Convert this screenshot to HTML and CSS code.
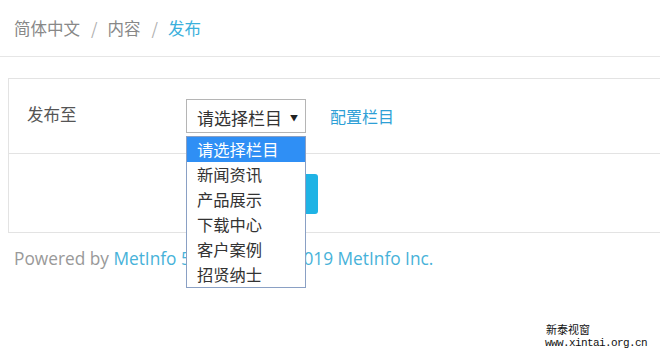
FILE: index.html
```html
<!DOCTYPE html>
<html lang="zh-CN">
<head>
<meta charset="utf-8">
<link rel="stylesheet" href="styles.css">
</head>
<body>
<div class="crumb">
  <span class="c-item">简体中文</span><span class="sep">/</span><span class="c-item">内容</span><span class="sep">/</span><span class="c-active">发布</span>
</div>
<div class="panel">
  <div class="row row-top">
    <span class="label">发布至</span>
    <div class="select"><span>请选择栏目</span><span class="arrow">▼</span></div>
    <a class="link">配置栏目</a>
  </div>
  <div class="row row-btn">
    <div class="btn"></div>
  </div>
</div>
<div class="footer">Powered by <span class="blue">MetInfo 5.3.19 ©2008-2019</span>&nbsp;<span class="blue">MetInfo Inc.</span></div>

<ul class="dropdown">
  <li class="sel">请选择栏目</li>
  <li>新闻资讯</li>
  <li>产品展示</li>
  <li>下载中心</li>
  <li>客户案例</li>
  <li>招贤纳士</li>
</ul>

<div class="mark">
  <div class="mark-cn">新泰视窗</div>
  <div class="mark-en">www.xintai.org.cn</div>
</div>
</body>
</html>
```
FILE: styles.css
```css
html, body {
  margin: 0;
  padding: 0;
  width: 660px;
  height: 352px;
  overflow: hidden;
  background: #fff;
  font-family: "Noto Sans CJK SC", "Open Sans", sans-serif;
  font-size: 16px;
  color: #555;
  position: relative;
}
.crumb {
  height: 56px;
  border-bottom: 1px solid #e6e6e6;
  display: flex;
  align-items: center;
  padding-left: 14px;
  color: #888;
  line-height: 1;
  font-size: 16.5px;
}
.sep {
  margin: 0 10px 0 11px;
  color: #b0b0b0;
}
.c-active {
  color: #3ab0dc;
}
.panel {
  margin: 21px 0 0 8px;
  width: 700px;
  border: 1px solid #e3e3e3;
}
.row-top {
  height: 74px;
  border-bottom: 1px solid #e3e3e3;
  display: flex;
  align-items: flex-start;
}
.label {
  margin: 23px 0 0 18px;
  width: 159px;
  color: #555;
  line-height: 24px;
  font-size: 16.5px;
}
.select {
  margin-top: 20px;
  width: 120px;
  height: 34px;
  border: 1px solid #b5b5b5;
  display: flex;
  align-items: center;
  justify-content: space-between;
  padding: 2px 7px 0 10px;
  box-sizing: border-box;
  color: #333;
  font-size: 17px;
}
.arrow {
  font-size: 8px;
  color: #222;
}
.link {
  margin: 25px 0 0 24px;
  color: #2e9fd6;
  line-height: 24px;
}
.row-btn {
  height: 78px;
  padding-left: 177px;
  display: flex;
  align-items: flex-start;
}
.btn {
  margin-top: 20px;
  width: 132px;
  height: 40px;
  background: #1fb3e5;
  border-radius: 3px;
}
.footer {
  margin: 14px 0 0 14px;
  line-height: 24px;
  color: #999;
  font-family: "Open Sans", "Noto Sans CJK SC", sans-serif;
  font-size: 17.3px;
  white-space: nowrap;
}
.blue {
  color: #47b2d9;
}
.dropdown {
  position: absolute;
  left: 186px;
  top: 136px;
  width: 118px;
  margin: 0;
  padding: 0;
  list-style: none;
  border: 1px solid #8aa0c4;
  background: #fff;
}
.dropdown li {
  height: 25px;
  line-height: 25px;
  padding-left: 10px;
  color: #333;
  font-size: 16.3px;
}
.dropdown li.sel {
  background: #2f8ff5;
  color: #fff;
}
.mark {
  position: absolute;
  left: 545px;
  top: 322px;
  color: #111;
  font-size: 11px;
  line-height: 14px;
}
.mark-cn {
  padding-left: 1px;
}
.mark-en {
  font-family: "Liberation Mono", monospace;
  font-size: 11px;
  letter-spacing: -0.6px;
}
```
